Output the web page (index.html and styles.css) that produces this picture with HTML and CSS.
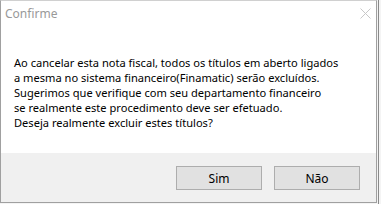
FILE: index.html
```html
<!DOCTYPE html>
<html>
<head>
<meta charset="utf-8">
<link rel="stylesheet" href="styles.css">
</head>
<body>
<div class="window">
  <div class="titlebar">
    <span class="title">Confirme</span>
    <svg class="close" width="11" height="11" viewBox="0 0 11 11"><path d="M0.5 0.5 L10.5 10.5 M10.5 0.5 L0.5 10.5" stroke="#c8c8c8" stroke-width="1" fill="none"/></svg>
  </div>
  <div class="content">
    <p class="message">Ao cancelar esta nota fiscal, todos os títulos em aberto ligados<br>a mesma no sistema financeiro(Finamatic) serão excluídos.<br>Sugerimos que verifique com seu departamento financeiro<br>se realmente este procedimento deve ser efetuado.<br>Deseja realmente excluir estes títulos?</p>
  </div>
  <div class="footer">
    <button class="btn">Sim</button>
    <button class="btn">Não</button>
  </div>
</div>
</body>
</html>
```
FILE: styles.css
```css
html, body {
  margin: 0;
  padding: 0;
}
body {
  width: 381px;
  height: 204px;
  overflow: hidden;
  font-family: "Noto Sans", sans-serif;
  background: linear-gradient(to right, #f4f4f4 378px, #8a8a8a 378px, #8a8a8a 379px, #f4f4f4 379px);
}
.window {
  box-sizing: border-box;
  width: 377px;
  height: 203px;
  border: 1px solid #a0a0a0;
  border-top-color: #d0d0d0;
  background: #ffffff;
  display: flex;
  flex-direction: column;
}
.titlebar {
  height: 30px;
  display: flex;
  align-items: flex-start;
  justify-content: space-between;
  padding: 3px 5px 0 4px;
}
.title {
  font-size: 12px;
  color: #999999;
  line-height: 16px;
  padding-top: 2px;
}
.close {
  margin-top: 4px;
}
.content {
  flex: 1;
  padding: 21px 0 0 13px;
}
.message {
  margin: 0;
  font-size: 11.1px;
  line-height: 15px;
  color: #000000;
}
.footer {
  height: 49px;
  box-sizing: border-box;
  background: #f0f0f0;
  display: flex;
  justify-content: flex-end;
  align-items: flex-start;
  gap: 12px;
  padding: 13px 16px 0 0;
}
.btn {
  box-sizing: border-box;
  width: 86px;
  height: 24px;
  border: 1px solid #adadad;
  background: #e1e1e1;
  font-family: "Noto Sans", sans-serif;
  font-size: 12px;
  color: #000000;
  padding: 0;
}
```
